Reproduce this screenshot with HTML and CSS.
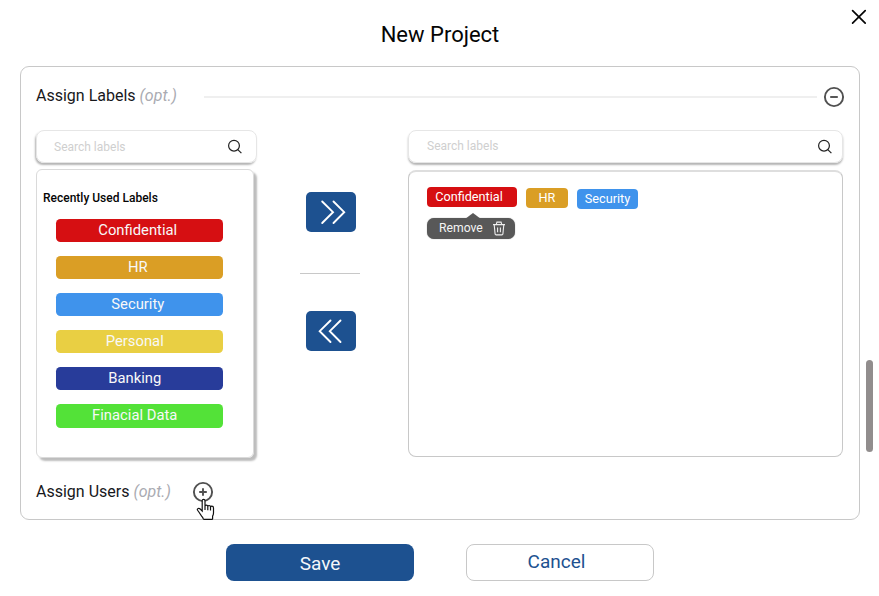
FILE: index.html
```html
<!DOCTYPE html>
<html lang="en">
<head>
<meta charset="utf-8">
<title>New Project</title>
<link rel="stylesheet" href="styles.css">
</head>
<body>
<main class="dialog">
  <header class="dialog-header">
    <h1>New Project</h1>
    <svg class="close" viewBox="0 0 16 16"><path d="M1.6 1.6 14.2 14.2M14.2 1.6 1.6 14.2"/></svg>
  </header>

  <section class="panel">
    <div class="section-head">
      <h2>Assign Labels <em>(opt.)</em></h2>
      <span class="rule"></span>
      <svg class="toggle" viewBox="0 0 22 22"><circle cx="11" cy="11" r="9.1"/><path d="M7.2 11h7.6"/></svg>
    </div>

    <div class="picker">
      <div class="source">
        <div class="search">
          <span>Search labels</span>
          <svg class="glass" viewBox="0 0 16 16"><circle cx="7" cy="6.7" r="5.4"/><path d="m10.8 10.6 3.6 3.6"/></svg>
        </div>
        <div class="recent">
          <h3>Recently Used Labels</h3>
          <ul>
            <li class="red">Confidential</li>
            <li class="amber">HR</li>
            <li class="blue">Security</li>
            <li class="yellow">Personal</li>
            <li class="navy">Banking</li>
            <li class="green">Finacial Data</li>
          </ul>
        </div>
      </div>

      <div class="transfer">
        <span class="move"><svg viewBox="0 0 50 40"><path d="M16.2 9.5 27 20.2 16.2 31M27.5 9.5 38.2 20.2 27.5 31"/></svg></span>
        <span class="divider"></span>
        <span class="move"><svg viewBox="0 0 50 40"><path d="M24.5 9.5 13.7 20.2 24.5 31M34.5 9.5 23.8 20.2 34.5 31"/></svg></span>
      </div>

      <div class="target">
        <div class="search">
          <span>Search labels</span>
          <svg class="glass" viewBox="0 0 16 16"><circle cx="7" cy="6.7" r="5.4"/><path d="m10.8 10.6 3.6 3.6"/></svg>
        </div>
        <div class="assigned">
          <div class="tags">
            <span class="tag red">Confidential</span>
            <span class="tag amber">HR</span>
            <span class="tag blue">Security</span>
          </div>
          <div class="remove">
            <span>Remove</span>
            <svg class="trash" viewBox="0 0 14 15"><path d="M1 3.6h12M4.3 3.3l.6-2.2h4.2l.6 2.2M2.2 3.8l.9 9.2q.1.9 1 .9h5.8q.9 0 1-.9l.9-9.2M5.6 6.4v4.8M8.4 6.4v4.8"/></svg>
          </div>
        </div>
      </div>
    </div>

    <div class="section-foot">
      <h2>Assign Users <em>(opt.)</em></h2>
      <div class="add">
        <svg class="toggle" viewBox="0 0 22 22"><circle cx="11" cy="11" r="9.1"/><path d="M7.2 11h7.6M11 7.2v7.6"/></svg>
        <svg class="pointer" viewBox="0 0 20 23"><path d="M6.2 13V2.8q0-1.5 1.4-1.5T9 2.8v5.3q.3-1 1.4-1 1.3 0 1.4 1.2.3-.8 1.3-.8 1.3 0 1.4 1.4.4-.7 1.3-.7 1.7 0 1.7 1.8v4.9q0 1.7-.9 3.2v2.6q0 .7-.8.7H8.2q-.6 0-.9-.7-.5-1.4-1.7-2.6l-2.4-3.6-1.6-2.2q-.7-1.3.5-1.8 1.1-.5 2.1.5zM9 8.1v4M11.8 8.3v4M14.5 8.9v3.6"/></svg>
      </div>
    </div>
  </section>

  <footer class="actions">
    <button class="save">Save</button>
    <button class="cancel">Cancel</button>
  </footer>
  <div class="scroll-thumb"></div>
</main>
</body>
</html>
```
FILE: styles.css
```css
* { box-sizing: border-box; }
body {
  margin: 0;
  background: #fff;
  color: #17181b;
  font-family: Roboto, "Liberation Sans", sans-serif;
  overflow: hidden;
}
h1, h2, h3, ul { margin: 0; padding: 0; font-weight: 400; list-style: none; }
svg { display: block; fill: none; flex: none; }

.dialog { position: relative; width: 879px; height: 596px; }
.dialog-header { height: 66px; padding: 21px 0 0 1px; text-align: center; }
h1 { font-size: 22px; line-height: 28px; color: #050505; }
.close { position: absolute; top: 9px; right: 12px; width: 16px; height: 16px; stroke: #050505; stroke-width: 1.7; stroke-linecap: round; }

.panel {
  width: 840px;
  height: 454px;
  margin-left: 20px;
  padding: 0 14px 0 15px;
  border: 1px solid #c8c8c8;
  border-radius: 9px;
}
.section-head { display: flex; align-items: center; height: 60px; }
h2 { flex: none; font-size: 16px; line-height: 20px; }
h2 em { color: #aaabb2; }
.section-head h2 { width: 168px; padding-bottom: 3px; }
.rule { flex: 1; height: 2px; background: #efefef; }
.toggle { width: 22px; height: 22px; stroke: #505050; stroke-width: 1.9; }
.section-head .toggle { margin-left: 6px; }

.picker { display: flex; padding-top: 3px; height: 335px; }
.source { width: 221px; }
.search {
  display: flex;
  align-items: center;
  justify-content: space-between;
  height: 33px;
  border: 1px solid #e6e6e6;
  border-radius: 8px;
  box-shadow: 0 2px 2px #b5b5b5;
  color: #cfcfcf;
  font-size: 12px;
}
.source .search { padding: 0 13px 0 17px; box-shadow: -1px 2px 2px #b5b5b5; }
.target .search { padding: 0 9px 0 18px; }
.target .search span { padding-bottom: 1px; }
.glass { width: 16px; height: 16px; stroke: #222; stroke-width: 1.2; }

.recent {
  width: 217.5px;
  height: 289px;
  margin-top: 6px;
  padding: 20px 0 0 6px;
  border: 1px solid #dadada;
  border-radius: 6px;
  box-shadow: 3px 3px 2px #bdbdbd;
}
h3 { font-size: 12px; line-height: 16px; font-weight: 500; color: #050505; }
.recent ul { display: grid; gap: 14px; padding: 12.5px 0 0 12.5px; }
.recent li {
  width: 167.5px;
  height: 23.2px;
  border-radius: 4.5px;
  color: #f8f8f8;
  font-size: 14.8px;
  line-height: 23px;
  text-align: center;
  padding-right: 3px;
}
.recent li.yellow, .recent li.navy, .recent li.green { padding-right: 9px; }
.red { background: #d60f12; }
.amber { background: #da9e25; }
.blue { background: #3f93ec; }
.yellow { background: #e9cf43; }
.navy { background: #283c9a; }
.green { background: #53e238; }

.transfer { display: flex; flex-direction: column; align-items: center; width: 60px; margin-left: 43px; padding-top: 62px; }
.move { width: 50px; height: 40px; margin-left: 2px; border-radius: 5px; background: #1d5190; }
.move svg { width: 50px; height: 40px; stroke: #fff; stroke-width: 1.9; stroke-linecap: round; }
.divider { width: 60px; height: 1px; margin: 41px 0 37px; background: #c8c8c8; }

.target { width: 435px; margin-left: 48px; }
.assigned {
  height: 287px;
  margin-top: 7px;
  padding: 16px 0 0 18px;
  border: 1px solid #c8c8c8;
  border-top: 2px solid #dedede;
  border-radius: 8px;
}
.tags { display: flex; gap: 9px; align-items: flex-start; height: 31px; }
.tag { height: 20px; border-radius: 4px; color: #fff; font-size: 12.7px; line-height: 20px; text-align: center; }
.tag.red { width: 90px; padding-right: 6px; margin-top: -1px; }
.tag.amber { width: 42px; }
.tag.blue { width: 61px; margin-top: 1px; }
.remove {
  position: relative;
  display: flex;
  align-items: center;
  justify-content: space-between;
  width: 88px;
  height: 21px;
  margin-top: -1px;
  padding: 0 9px 1px 12px;
  border-radius: 7px;
  background: #585858;
  box-shadow: 0 0 1px #777;
  color: #f4f4f4;
  font-size: 12.2px;
}
.remove::before {
  content: "";
  position: absolute;
  left: 38px;
  top: -5px;
  border: 8px solid transparent;
  border-top: 0;
  border-bottom: 6px solid #585858;
}
.trash { width: 14px; height: 15px; stroke: #eee; stroke-width: 1.1; }

.section-foot { display: flex; align-items: center; height: 57px; padding-top: 2px; }
.section-foot h2 { width: 156px; }
.add { position: relative; width: 22px; height: 22px; }
.pointer { position: absolute; left: 3.5px; top: 17px; width: 20px; height: 23px; fill: #fff; stroke: #111; stroke-width: 1.2; }

.actions { display: flex; gap: 52px; padding: 24px 0 0 226px; }
button { width: 188px; height: 37px; padding: 0; border-radius: 8px; font: 19px/20px Roboto, "Liberation Sans", sans-serif; }
.save { border: 0; background: #1d5190; color: #f4f7fa; padding-top: 2px; }
.cancel { border: 1px solid #c8c8c8; background: #fff; color: #1d5190; padding: 0 7px 1px 0; }
.scroll-thumb { position: absolute; left: 866px; top: 360px; width: 7px; height: 92px; border-radius: 4px; background: #918d8d; }
```
